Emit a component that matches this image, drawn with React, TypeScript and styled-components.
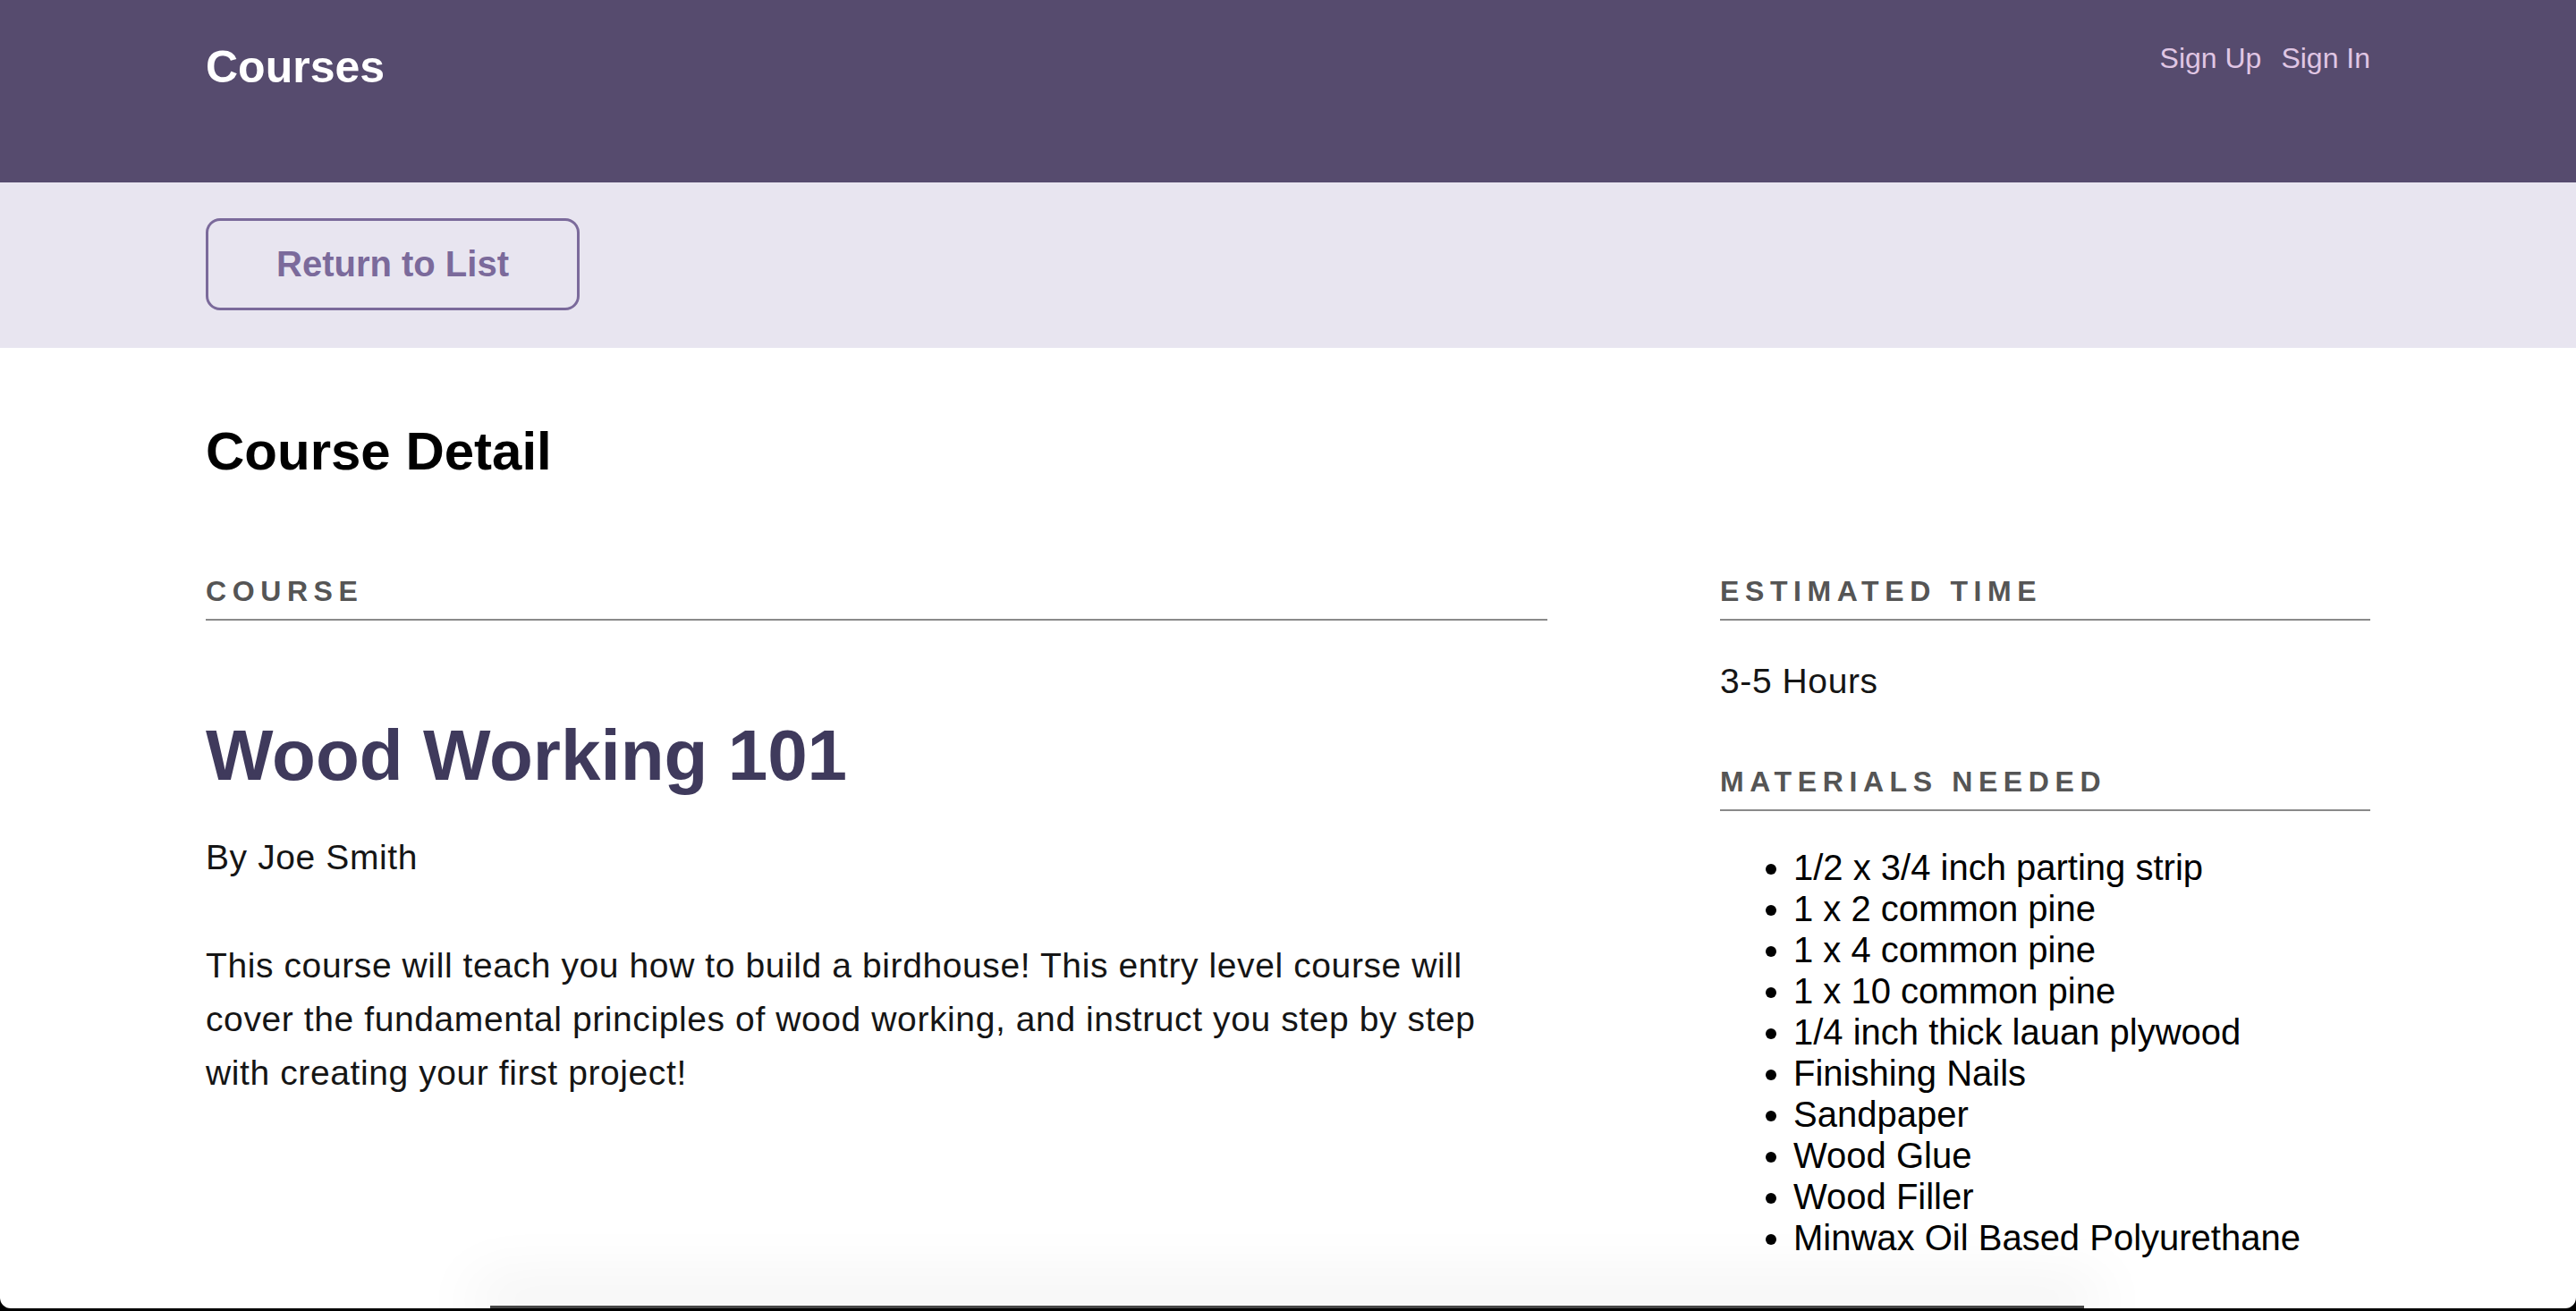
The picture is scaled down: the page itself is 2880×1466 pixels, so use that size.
import React from "react";
import styled, { createGlobalStyle } from "styled-components";

const GlobalStyle = createGlobalStyle`
  * {
    box-sizing: border-box;
  }
  html, body {
    margin: 0;
    padding: 0;
    background: #000;
  }
  body {
    font-family: "Liberation Sans", Arial, Helvetica, sans-serif;
    color: #000;
  }
`;

const Page = styled.div`
  position: relative;
  min-height: 1463px;
  background: #fff;
  border-radius: 0 0 12px 12px;
  overflow: hidden;
`;

const Header = styled.header`
  height: 204px;
  background-color: #564b6e;
  padding: 0 230px;
  display: flex;
  justify-content: space-between;
  align-items: flex-start;
`;

const Logo = styled.h1`
  margin: 47px 0 0;
  font-size: 50px;
  line-height: 56px;
  font-weight: 700;
  color: #fff;
`;

const Nav = styled.nav`
  margin-top: 45px;
  display: flex;
  gap: 22px;
`;

const NavLink = styled.a`
  font-size: 32px;
  line-height: 40px;
  color: #e0c6e4;
  text-decoration: none;
  cursor: pointer;
`;

const ActionsBar = styled.div`
  height: 185px;
  background-color: #e8e5f0;
  padding: 40px 230px 0;
`;

const OutlineButton = styled.button`
  width: 418px;
  height: 103px;
  border: 3px solid #7b6a9b;
  border-radius: 16px;
  background: transparent;
  color: #7b6a9b;
  font-family: "Liberation Sans", Arial, sans-serif;
  font-size: 40px;
  font-weight: 700;
  cursor: pointer;
`;

const Main = styled.main`
  padding: 80px 230px 0;
`;

const PageTitle = styled.h2`
  margin: 0 0 100px;
  font-size: 60px;
  line-height: 72px;
  font-weight: 700;
`;

const Columns = styled.div`
  display: flex;
  justify-content: space-between;
  align-items: flex-start;
`;

const Column = styled.div<{ $width: number }>`
  width: ${(p) => p.$width}px;
`;

const SectionLabel = styled.h3<{ $top?: number }>`
  margin: ${(p) => p.$top ?? 0}px 0 0;
  padding-bottom: 11px;
  border-bottom: 2px solid #8a8a8a;
  font-size: 32px;
  line-height: 40px;
  font-weight: 700;
  letter-spacing: 6.6px;
  text-transform: uppercase;
  color: #555;
`;

const CourseName = styled.h4`
  margin: 103px 0 0;
  font-size: 80px;
  line-height: 95px;
  font-weight: 700;
  color: #3f3a5c;
`;

const BodyText = styled.p<{ $top: number }>`
  margin: ${(p) => p.$top}px 0 0;
  max-width: 1450px;
  font-size: 39px;
  line-height: 60px;
  font-weight: 400;
  letter-spacing: 0.6px;
  color: #151515;
`;

const Materials = styled.ul`
  margin: 40px 0 0;
  padding-left: 82px;
  font-size: 40px;
  line-height: 46px;
  color: #000;
`;

const DockEdge = styled.div`
  position: absolute;
  left: 548px;
  right: 550px;
  bottom: 0;
  height: 3px;
  background: #474747;
  box-shadow: 0 -8px 70px 18px rgba(0, 0, 0, 0.07);
  pointer-events: none;
`;

const materials = [
  "1/2 x 3/4 inch parting strip",
  "1 x 2 common pine",
  "1 x 4 common pine",
  "1 x 10 common pine",
  "1/4 inch thick lauan plywood",
  "Finishing Nails",
  "Sandpaper",
  "Wood Glue",
  "Wood Filler",
  "Minwax Oil Based Polyurethane",
];

const App: React.FC = () => {
  return (
    <>
      <GlobalStyle />
      <Page>
        <Header>
          <Logo>Courses</Logo>
          <Nav>
            <NavLink>Sign Up</NavLink>
            <NavLink>Sign In</NavLink>
          </Nav>
        </Header>
        <ActionsBar>
          <OutlineButton type="button">Return to List</OutlineButton>
        </ActionsBar>
        <Main>
          <PageTitle>Course Detail</PageTitle>
          <Columns>
            <Column $width={1500}>
              <SectionLabel>Course</SectionLabel>
              <CourseName>Wood Working 101</CourseName>
              <BodyText $top={37}>By Joe Smith</BodyText>
              <BodyText $top={61}>
                This course will teach you how to build a birdhouse! This entry
                level course will cover the fundamental principles of wood
                working, and instruct you step by step with creating your first
                project!
              </BodyText>
            </Column>
            <Column $width={727}>
              <SectionLabel>Estimated Time</SectionLabel>
              <BodyText $top={38}>3-5 Hours</BodyText>
              <SectionLabel $top={62}>Materials Needed</SectionLabel>
              <Materials>
                {materials.map((m) => (
                  <li key={m}>{m}</li>
                ))}
              </Materials>
            </Column>
          </Columns>
        </Main>
        <DockEdge />
      </Page>
    </>
  );
};

export default App;
